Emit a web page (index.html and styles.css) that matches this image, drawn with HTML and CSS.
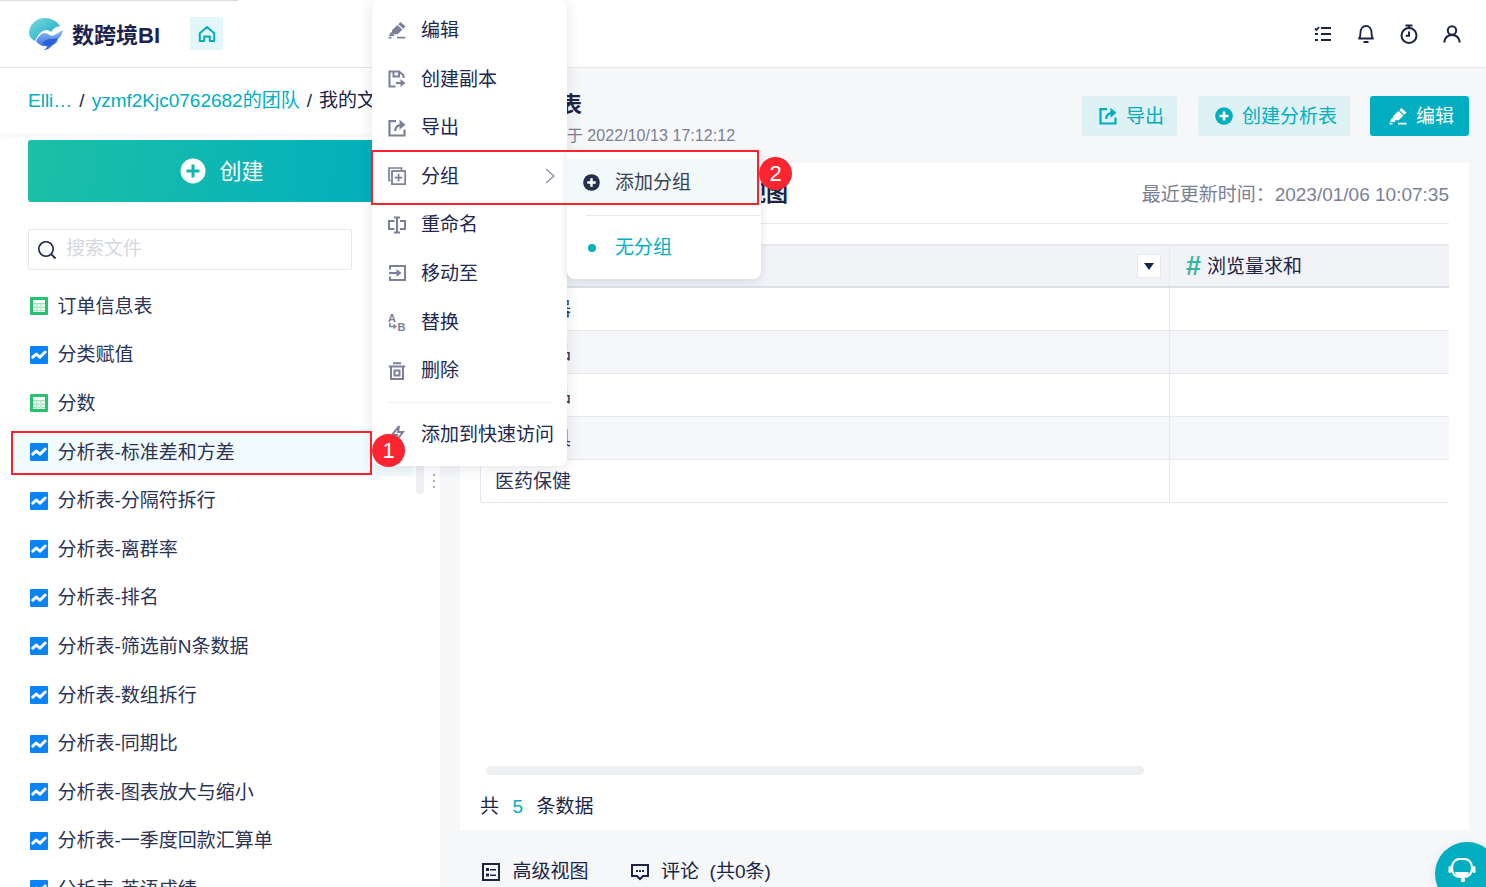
FILE: index.html
```html
<!DOCTYPE html>
<html lang="zh-CN">
<head>
<meta charset="utf-8">
<title>数跨境BI</title>
<link rel="stylesheet" href="styles.css">
</head>
<body>
<svg class="defs" width="0" height="0" aria-hidden="true">
  <symbol id="i-table" viewBox="0 0 18 18">
    <rect width="18" height="18" rx="1" fill="#25c36f"/>
    <rect x="3" y="3" width="12" height="12" fill="#fff"/>
    <path d="M3 6.200h12v1H3zM3 9.800h12v1H3zM3 13h12v.8H3zM6.500 7v8h1V7zM10.500 7v8h1V7z" fill="#7bdca6"/>
  </symbol>
  <symbol id="i-chart" viewBox="0 0 18 18">
    <rect width="18" height="18" rx="1" fill="#0a84f5"/>
    <path d="M2.800 11.200 6.300 8l3.600 3.200L15.200 6" fill="none" stroke="#fff" stroke-width="3" stroke-linecap="round" stroke-linejoin="round"/>
  </symbol>
  <symbol id="i-edit" viewBox="0 0 18 18">
    <path d="M12.500 1 17.500 5.500 15.300 7.700 10.300 3.200z" fill="currentColor"/>
    <path d="M9.400 4.100 14.400 8.600 9.800 13.200H5.500L4 11.700V9.200z" fill="currentColor"/>
    <path d="M3 10.800 6.500 14.300 5.800 15H.8z" fill="currentColor"/>
    <path d="M9 15.800h8.500V17.500H9zM.5 15.800h3V17.500h-3z" fill="currentColor"/>
  </symbol>
  <symbol id="i-export" viewBox="0 0 18 18">
    <path d="M8 2.200H1.500v14.300h15v-6" fill="none" stroke="currentColor" stroke-width="2.200"/>
    <path d="M7.200 12c0-4 2.300-6.200 7.300-6.200" fill="none" stroke="currentColor" stroke-width="2.200"/>
    <path d="M11.500 .8 17.500 5.800l-6 5z" fill="currentColor"/>
  </symbol>
  <symbol id="i-plus" viewBox="0 0 18 18">
    <circle cx="9" cy="9" r="8.800" fill="currentColor"/>
    <path d="M4.500 9h9M9 4.500v9" stroke="#fff" stroke-width="2.600"/>
  </symbol>
</svg>

<header class="topbar">
  <div class="brand">
    <svg class="logo" width="36" height="34" viewBox="0 0 36 34">
      <defs>
        <linearGradient id="lg1" x1="0" y1="0" x2="1" y2="1"><stop offset="0" stop-color="#7ddbe0"/><stop offset="1" stop-color="#0fa6c4"/></linearGradient>
        <linearGradient id="lg2" x1="0" y1="0" x2="0" y2="1"><stop offset="0" stop-color="#8fbdf7"/><stop offset="1" stop-color="#2a62dc"/></linearGradient>
      </defs>
      <path d="M1 16C1 7 9 1 17 1c6 0 12 3 15 8-4 .5-7 3-9 6-2-2-5-3-8-1-4 2-6 6-8 10-4-2-6-5-6-8z" fill="url(#lg1)"/>
      <path d="M8 24c2-4 5-8 9-8 3 0 5 3 7 3 3-1 7-4 11-6-1 4-2 7-5 9 0 3-3 5-5 6-3 3-6 5-9 5 2-1 3-3 3-4-4 1-8-1-11-5z" fill="url(#lg2)"/>
      <path d="M14 26c3-2 6-5 10-4 2 0 4-1 6-1-2 4-6 7-9 8-2 0-5-1-7-3z" fill="#2b5fd8"/>
    </svg>
    <span class="brand-name">数跨境BI</span>
    <span class="home">
      <svg width="18" height="18" viewBox="0 0 18 18"><path d="M1.800 8.200 9 2l7.200 6.200V16h-4.400v-4.600H6.200V16H1.800z" fill="none" stroke="#00aebf" stroke-width="2" stroke-linejoin="round"/></svg>
    </span>
  </div>
  <div class="tools">
    <svg width="18" height="18" viewBox="0 0 18 18"><path d="M7 3h10M7 9h10M7 15h10" fill="none" stroke="#1c2444" stroke-width="2.200"/><path d="M1 3.500l1.500 1.500L5 2M1 9h3M1 15h3" fill="none" stroke="#1c2444" stroke-width="1.800"/></svg>
    <svg width="18" height="20" viewBox="0 0 18 20"><path d="M2 14.500c1.400-1.500 1.500-3 1.500-6C3.500 4.500 5.800 2 9 2s5.500 2.500 5.500 6.500c0 3 .1 4.500 1.500 6zM6.500 18h5" fill="none" stroke="#1c2444" stroke-width="1.800" stroke-linejoin="round"/></svg>
    <svg width="18" height="20" viewBox="0 0 18 20"><circle cx="9" cy="11.500" r="7.500" fill="none" stroke="#1c2444" stroke-width="2"/><path d="M5.500 1.500h7M9 1.500v2.500M9 7.500v4.200H5.800" fill="none" stroke="#1c2444" stroke-width="2"/></svg>
    <svg width="18" height="18" viewBox="0 0 18 18"><circle cx="9" cy="5.500" r="4.200" fill="none" stroke="#1c2444" stroke-width="2"/><path d="M1.200 17.500c.6-4.600 3.600-7.600 7.800-7.600s7.200 3 7.800 7.600" fill="none" stroke="#1c2444" stroke-width="2"/></svg>
  </div>
</header>

<div class="layout">
  <aside class="sidebar">
    <nav class="crumbs">
      <a class="crumb">Elli…</a><span class="sep">/</span><a class="crumb">yzmf2Kjc0762682的团队</a><span class="sep">/</span><span class="crumb-now">我的文件</span>
    </nav>
    <button class="create">
      <svg class="create-icon" width="26" height="26" viewBox="0 0 26 26"><circle cx="13" cy="13" r="12.500" fill="#fff"/><path d="M6.500 13h13M13 6.500v13" stroke="#0fb7b3" stroke-width="3"/></svg>
      <span>创建</span>
    </button>
    <div class="search">
      <svg width="20" height="20" viewBox="0 0 20 20"><circle cx="9" cy="9" r="7.200" fill="none" stroke="#1c2444" stroke-width="1.600"/><path d="m14.200 14.200 4.300 4.300" stroke="#1c2444" stroke-width="1.800"/></svg>
      <span class="placeholder">搜索文件</span>
    </div>
    <ul class="files">
      <li class="file"><svg class="ficon"><use href="#i-table"/></svg>订单信息表</li>
      <li class="file"><svg class="ficon"><use href="#i-chart"/></svg>分类赋值</li>
      <li class="file"><svg class="ficon"><use href="#i-table"/></svg>分数</li>
      <li class="file is-active"><svg class="ficon"><use href="#i-chart"/></svg>分析表-标准差和方差</li>
      <li class="file"><svg class="ficon"><use href="#i-chart"/></svg>分析表-分隔符拆行</li>
      <li class="file"><svg class="ficon"><use href="#i-chart"/></svg>分析表-离群率</li>
      <li class="file"><svg class="ficon"><use href="#i-chart"/></svg>分析表-排名</li>
      <li class="file"><svg class="ficon"><use href="#i-chart"/></svg>分析表-筛选前N条数据</li>
      <li class="file"><svg class="ficon"><use href="#i-chart"/></svg>分析表-数组拆行</li>
      <li class="file"><svg class="ficon"><use href="#i-chart"/></svg>分析表-同期比</li>
      <li class="file"><svg class="ficon"><use href="#i-chart"/></svg>分析表-图表放大与缩小</li>
      <li class="file"><svg class="ficon"><use href="#i-chart"/></svg>分析表-一季度回款汇算单</li>
      <li class="file"><svg class="ficon"><use href="#i-chart"/></svg>分析表-英语成绩</li>
    </ul>
    <span class="side-scroll"></span>
    <span class="grip"><i></i><i></i><i></i></span>
  </aside>

  <main class="main">
    <div class="toolbar">
      <div class="doc">
        <h1 class="doc-title">A区明细表</h1>
        <p class="doc-meta">user01 创建于 2022/10/13 17:12:12</p>
      </div>
      <div class="actions">
        <button class="btn"><svg class="bicon"><use href="#i-export"/></svg>导出</button>
        <button class="btn"><svg class="bicon"><use href="#i-plus"/></svg>创建分析表</button>
        <button class="btn btn-primary"><svg class="bicon"><use href="#i-edit"/></svg>编辑</button>
      </div>
    </div>

    <section class="card">
      <div class="card-head">
        <h2 class="card-title">分析表标准差和方差的高级视图</h2>
        <span class="updated">最近更新时间：2023/01/06 10:07:35</span>
      </div>
      <div class="table">
        <div class="tr th">
          <div class="td td-main"><span class="caret"></span></div>
          <div class="td td-num"><span class="hash">#</span>浏览量求和</div>
        </div>
        <div class="tr"><div class="td td-main">家用电器</div><div class="td td-num"></div></div>
        <div class="tr alt"><div class="td td-main">办公用品</div><div class="td td-num"></div></div>
        <div class="tr"><div class="td td-main">家居用品</div><div class="td td-num"></div></div>
        <div class="tr alt"><div class="td td-main">文体玩具</div><div class="td td-num"></div></div>
        <div class="tr"><div class="td td-main">医药保健</div><div class="td td-num"></div></div>
      </div>
      <div class="hscroll"></div>
      <div class="total">共<b>5</b>条数据</div>
    </section>

    <div class="tabs">
      <span class="tab">
        <svg width="18" height="18" viewBox="0 0 18 18"><rect x="1" y="1" width="16" height="16" fill="none" stroke="#1c2444" stroke-width="2"/><path d="M4 5h3v3H4zM8 6h6v1.500H8zM4 10.500h3v3H4zM8 11.500h6V13H8z" fill="#1c2444"/></svg>
        高级视图
      </span>
      <span class="tab">
        <svg width="18" height="18" viewBox="0 0 18 18"><path d="M1 2h16v11h-5l-3 3-3-3H1z" fill="none" stroke="#1c2444" stroke-width="2"/><path d="M5 7h2v2H5zM8 7h2v2H8zM11 7h2v2h-2z" fill="#1c2444"/></svg>
        评论&nbsp;&nbsp;(共0条)
      </span>
    </div>
  </main>
</div>

<div class="menu">
  <div class="mi"><svg class="micon"><use href="#i-edit"/></svg>编辑</div>
  <div class="mi">
    <svg class="micon" viewBox="0 0 18 18"><path d="M7.500 16.500H1.500V1.500h9.500l4.500 4v2.500M5.500 1.500v5h5.500v-5" fill="none" stroke="currentColor" stroke-width="2"/><path d="M8 13h6" stroke="currentColor" stroke-width="2.200"/><path d="m12.500 9 5 4-5 4z" fill="currentColor"/></svg>创建副本
  </div>
  <div class="mi"><svg class="micon"><use href="#i-export"/></svg>导出</div>
  <div class="mi">
    <svg class="micon" viewBox="0 0 18 18"><path d="M2.500 13.500H1V1h12.500v2" fill="none" stroke="currentColor" stroke-width="1.700"/><rect x="4" y="4" width="13.200" height="13.200" fill="none" stroke="currentColor" stroke-width="1.800"/><path d="M6.800 10.600h7.600M10.600 6.800v7.600" stroke="currentColor" stroke-width="1.700"/></svg>分组
    <svg class="chev" width="10" height="16" viewBox="0 0 10 16"><path d="m1 1 8 7-8 7" fill="none" stroke="#8a8fa6" stroke-width="1.300"/></svg>
  </div>
  <div class="mi">
    <svg class="micon" viewBox="0 0 18 18"><path d="M6.500 5H1v8h5.500M12 5h5v8h-5" fill="none" stroke="currentColor" stroke-width="2"/><path d="M9 2v14M6 1.500h6M6 16.500h6" stroke="currentColor" stroke-width="2"/></svg>重命名
  </div>
  <div class="mi">
    <svg class="micon" viewBox="0 0 18 18"><path d="M2 5.500V2h15v14H2v-3.500" fill="none" stroke="currentColor" stroke-width="2"/><path d="M1 9h9" stroke="currentColor" stroke-width="2.200"/><path d="m8.500 5 5 4-5 4z" fill="currentColor"/></svg>移动至
  </div>
  <div class="mi">
    <svg class="micon" viewBox="0 0 18 18"><text class="ab" x="0" y="8.500">A</text><text class="ab" x="9.500" y="17.500">B</text><path d="M2 10v3.500h4" fill="none" stroke="currentColor" stroke-width="1.700"/><path d="m5.500 10.700 3.500 2.800-3.500 2.800z" fill="currentColor"/></svg>替换
  </div>
  <div class="mi">
    <svg class="micon" viewBox="0 0 18 18"><path d="M.8 4.500h16.400M5 1.300h8" stroke="currentColor" stroke-width="2"/><path d="M3 4.500v12.500h12V4.500M6.500 8.500h5v5h-5z" fill="none" stroke="currentColor" stroke-width="2"/></svg>删除
  </div>
  <div class="menu-sep"></div>
  <div class="mi">
    <svg class="micon" viewBox="0 0 18 18"><path d="M11 1 4 10h5l-2 7 8-10h-5z" fill="none" stroke="currentColor" stroke-width="2"/></svg>添加到快速访问
  </div>
</div>

<div class="submenu">
  <div class="sub-add">
    <svg class="sub-plus"><use href="#i-plus"/></svg>添加分组
  </div>
  <div class="sub-sep"></div>
  <div class="sub-none"><i class="dot"></i>无分组</div>
</div>

<span class="mark mark-1"></span>
<span class="mark mark-2"></span>
<span class="badge badge-1">1</span>
<span class="badge badge-2">2</span>

<div class="chat">
  <svg width="28" height="25" viewBox="0 0 28 25"><rect x="4" y="1" width="20" height="18" rx="8" fill="none" stroke="#fff" stroke-width="2.200"/><path d="M7 14h14c-.5 3-3 4.500-7 4.500S7.500 17 7 14z" fill="#fff"/><rect x=".5" y="8" width="3" height="7" rx="1.500" fill="#fff"/><rect x="24.500" y="8" width="3" height="7" rx="1.500" fill="#fff"/><circle cx="15" cy="22" r="2.200" fill="#fff"/></svg>
</div>
</body>
</html>
```
FILE: styles.css
```css
* { box-sizing: border-box; }
html, body { margin: 0; height: 100%; }
body {
  position: relative;
  width: 1486px;
  height: 887px;
  overflow: hidden;
  display: flex;
  flex-direction: column;
  background: #fff;
  color: #1c2444;
  font: 19px/25px "Liberation Sans", "Noto Sans CJK SC", sans-serif;
}
.defs { position: absolute; }
ul { list-style: none; margin: 0; padding: 0; }
h1, h2, p { margin: 0; }
button { font: inherit; border: 0; cursor: pointer; }

/* top bar */
.topbar {
  flex: none;
  height: 68px;
  display: flex;
  align-items: center;
  justify-content: space-between;
  padding: 0 25px 0 28px;
  border-bottom: 1px solid #e6e8ec;
  background: linear-gradient(#dcdde0, #dcdde0) no-repeat 0 0 / 238px 1px #fff;
}
.brand { display: flex; align-items: center; }
.logo { flex: none; }
.brand-name {
  margin-left: 8px;
  padding-top: 3px;
  width: 118px;
  font-size: 22px;
  font-weight: 700;
  color: #1d2350;
}
.home {
  width: 33px;
  height: 33px;
  display: flex;
  align-items: center;
  justify-content: center;
  background: #e4f6fa;
}
.tools { display: flex; align-items: center; gap: 25px; }
.tools svg { display: block; }

/* layout */
.layout { flex: 1; min-height: 0; display: flex; }
.sidebar {
  position: relative;
  flex: none;
  width: 440px;
  overflow: hidden;
  background: #fff;
}
.crumbs {
  height: 66px;
  display: flex;
  align-items: center;
  padding: 0 0 2px 28px;
  white-space: nowrap;
  box-shadow: 0 2px 6px rgba(30, 40, 70, .05);
}
.crumb { color: #00aebf; }
.sep { margin: 0 7px; color: #1c2444; }
.crumb-now { color: #1c2444; }
.create {
  display: flex;
  align-items: center;
  justify-content: center;
  gap: 13px;
  width: 388px;
  height: 62px;
  margin: 6px 0 0 28px;
  border-radius: 3px;
  color: #fff;
  font-size: 22px;
  background: linear-gradient(100deg, #1cc0a6, #00adbf);
}
.search {
  display: flex;
  align-items: center;
  gap: 9px;
  width: 324px;
  height: 41px;
  margin: 27px 0 0 28px;
  padding-left: 8px;
  border: 1px solid #e8e9ee;
  border-radius: 2px;
}
.placeholder { color: #d5d8e2; margin-top: -2px; }
.files { margin-top: 12px; }
.file {
  display: flex;
  align-items: center;
  gap: 9.500px;
  height: 48.6px;
  width: 399px;
  margin-left: 14px;
  padding-left: 16px;
  white-space: nowrap;
  color: #2a3355;
  border-radius: 0 0 4px 0;
}
.file.is-active { background: #f1fafc; }
.ficon { flex: none; width: 18px; height: 18px; }
.side-scroll {
  position: absolute;
  left: 416px;
  top: 200px;
  width: 8px;
  height: 226px;
  border-radius: 4px;
  background: #eff0f3;
}
.grip {
  position: absolute;
  left: 433px;
  top: 406px;
  display: flex;
  flex-direction: column;
  gap: 4px;
}
.grip i { width: 2px; height: 2px; background: #a8acba; }

/* main */
.main {
  flex: 1;
  min-width: 0;
  padding: 0 17px 0 20px;
  overflow: hidden;
  background: #f5f7f9;
}
.toolbar {
  height: 95px;
  display: flex;
  justify-content: space-between;
  padding-left: 20px;
}
.doc { padding-top: 24px; }
.doc-title { margin-left: -2px; font-size: 22px; line-height: 26px; font-weight: 700; color: #1c2444; }
.doc-meta { margin: 7px 0 0 1px; font-size: 16px; line-height: 22px; letter-spacing: .05px; color: #7a7f96; white-space: nowrap; }
.actions { display: flex; gap: 21px; padding-top: 28px; }
.btn {
  display: flex;
  align-items: center;
  gap: 9px;
  height: 40px;
  padding: 0 13px 0 17px;
  border-radius: 3px;
  background: #def1f5;
  color: #00aebf;
}
.btn-primary {
  margin-left: -1px;
  padding: 0 15px 0 19px;
  background: #00aebf;
  color: #fff;
}
.bicon { flex: none; width: 18px; height: 18px; }

.card {
  height: 667px;
  display: flex;
  flex-direction: column;
  padding: 0 20px;
  background: #fff;
}
.card-head {
  flex: none;
  height: 61px;
  display: flex;
  align-items: center;
  justify-content: space-between;
  border-bottom: 1px solid #e8e9ee;
}
.card-title { font-size: 22px; font-weight: 700; color: #1c2444; white-space: nowrap; }
.updated { padding-top: 2px; color: #7a7f96; }
.table { margin-top: 20px; }
.tr { display: flex; height: 43px; border-bottom: 1px solid #e8e9ee; }
.tr.th {
  height: 44px;
  border-top: 2px solid #e8e9ee;
  border-bottom: 2px solid #dcdfe6;
  background: #f1f3f7;
}
.tr.alt { background: #f6f7fa; }
.td { display: flex; align-items: center; color: #2a3355; }
.td-main {
  flex: none;
  width: 690px;
  padding: 1px 0 0 14px;
  border-left: 1px solid #e8e9ee;
  border-right: 1px solid #e8e9ee;
}
.td-num { flex: 1; padding-left: 16px; color: #1c2444; }
.th .td-main { justify-content: flex-end; padding: 0 8px 0 0; border-left: 0; }
.caret {
  position: relative;
  width: 24px;
  height: 24px;
  display: flex;
  align-items: center;
  justify-content: center;
  background: #fff;
  border: 1px solid #e8e9ee;
}
.caret::after {
  content: "";
  border-style: solid;
  border-width: 7px 5.500px 0;
  border-color: #1c2444 transparent transparent;
}
.hash { width: 21px; color: #35b5a0; font-size: 27px; font-weight: 700; }
.hscroll {
  flex: none;
  width: 658px;
  height: 9px;
  margin: auto 0 0 6px;
  border-radius: 5px;
  background: #eeeff1;
}
.total { flex: none; display: flex; gap: 13.500px; height: 55px; padding-top: 19px; }
.total b { font-weight: 400; color: #00aebf; }

.tabs { display: flex; gap: 42px; margin-top: 29px; padding-left: 22px; }
.tab { display: flex; align-items: center; gap: 12.500px; color: #1c2444; }

/* floating menus */
.menu {
  position: absolute;
  left: 372px;
  top: 0;
  width: 195px;
  height: 466px;
  padding-top: 6.200px;
  background: #fff;
  border-radius: 8px;
  box-shadow: 0 2px 14px rgba(30, 40, 70, .12);
}
.mi {
  position: relative;
  display: flex;
  align-items: center;
  gap: 15px;
  height: 48.6px;
  padding-left: 16px;
  white-space: nowrap;
  color: #20284f;
}
.micon { flex: none; width: 18px; height: 18px; color: #7c8199; }
.ab { font: 700 11px "Liberation Sans", sans-serif; fill: currentColor; }
.chev { position: absolute; right: 12px; top: 16px; }
.menu-sep { height: 1px; margin: 6.800px 16px 7px; background: #eff0f4; }
.submenu {
  position: absolute;
  left: 567px;
  top: 152px;
  width: 194px;
  height: 127px;
  padding-top: 7px;
  background: #fff;
  border-radius: 0 8px 8px 8px;
  box-shadow: 0 2px 10px rgba(30, 40, 70, .14);
}
.sub-add {
  display: flex;
  align-items: center;
  gap: 15px;
  height: 47px;
  padding-left: 16px;
  background: #f1f9fb;
  color: #3a4256;
}
.sub-plus { width: 17px; height: 17px; color: #242f4a; }
.sub-sep { height: 1px; margin: 9px 0 0 19px; background: #e8e9ee; }
.sub-none {
  display: flex;
  align-items: center;
  gap: 19px;
  height: 63px;
  padding-left: 21px;
  color: #00aebf;
}
.dot { width: 8px; height: 8px; border-radius: 50%; background: #00aebf; }

.mark { position: absolute; border: 2px solid #f8232c; pointer-events: none; }
.mark-1 { left: 11px; top: 431px; width: 361px; height: 44px; }
.mark-2 { left: 371px; top: 150px; width: 388px; height: 55px; }
.badge {
  position: absolute;
  width: 33px;
  height: 33px;
  display: flex;
  align-items: center;
  justify-content: center;
  border-radius: 50%;
  background: #fb2532;
  color: #fff;
  font-size: 22px;
}
.badge-1 { left: 372px; top: 434px; }
.badge-2 { left: 759px; top: 157px; }
.chat {
  position: absolute;
  left: 1435px;
  top: 842px;
  width: 64px;
  height: 64px;
  padding: 16px 0 0 13px;
  border-radius: 50%;
  background: #00aebf;
  box-shadow: 0 2px 10px rgba(30, 40, 70, .1);
}
```
